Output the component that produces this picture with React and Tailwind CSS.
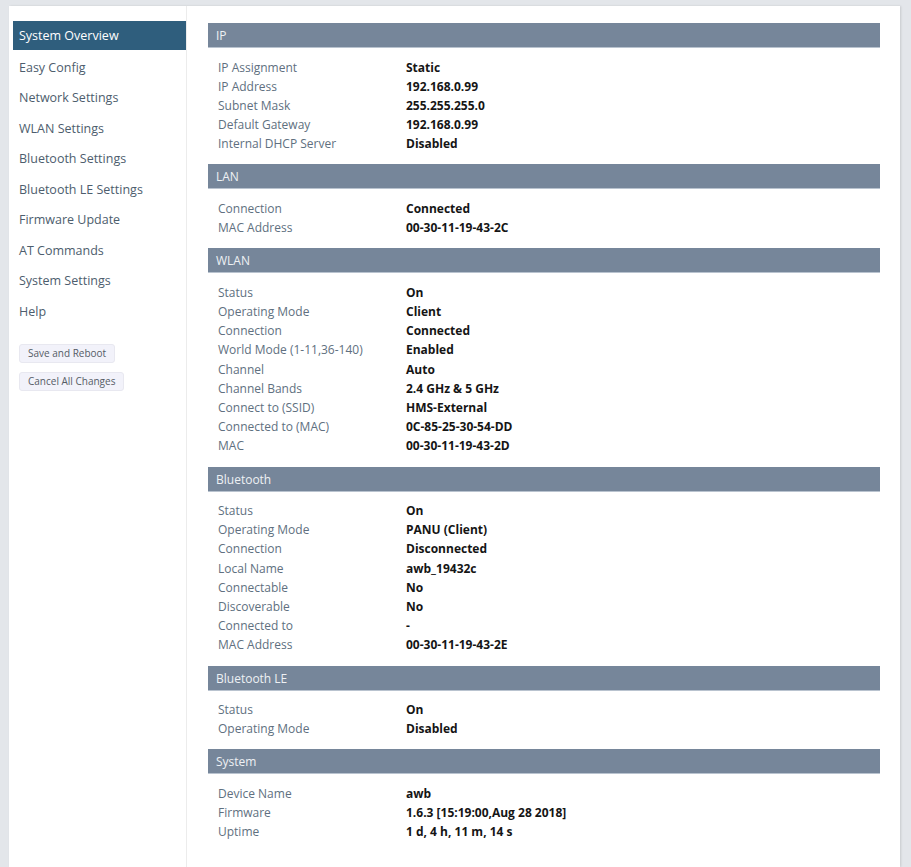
import React from 'react';

const menu = [
    'System Overview',
    'Easy Config',
    'Network Settings',
    'WLAN Settings',
    'Bluetooth Settings',
    'Bluetooth LE Settings',
    'Firmware Update',
    'AT Commands',
    'System Settings',
    'Help',
];

const sections = [
    {
        title: 'IP',
        rows: [
            ['IP Assignment', 'Static'],
            ['IP Address', '192.168.0.99'],
            ['Subnet Mask', '255.255.255.0'],
            ['Default Gateway', '192.168.0.99'],
            ['Internal DHCP Server', 'Disabled'],
        ],
    },
    {
        title: 'LAN',
        rows: [
            ['Connection', 'Connected'],
            ['MAC Address', '00-30-11-19-43-2C'],
        ],
    },
    {
        title: 'WLAN',
        rows: [
            ['Status', 'On'],
            ['Operating Mode', 'Client'],
            ['Connection', 'Connected'],
            ['World Mode (1-11,36-140)', 'Enabled'],
            ['Channel', 'Auto'],
            ['Channel Bands', '2.4 GHz & 5 GHz'],
            ['Connect to (SSID)', 'HMS-External'],
            ['Connected to (MAC)', '0C-85-25-30-54-DD'],
            ['MAC', '00-30-11-19-43-2D'],
        ],
    },
    {
        title: 'Bluetooth',
        rows: [
            ['Status', 'On'],
            ['Operating Mode', 'PANU (Client)'],
            ['Connection', 'Disconnected'],
            ['Local Name', 'awb_19432c'],
            ['Connectable', 'No'],
            ['Discoverable', 'No'],
            ['Connected to', '-'],
            ['MAC Address', '00-30-11-19-43-2E'],
        ],
    },
    {
        title: 'Bluetooth LE',
        rows: [
            ['Status', 'On'],
            ['Operating Mode', 'Disabled'],
        ],
    },
    {
        title: 'System',
        rows: [
            ['Device Name', 'awb'],
            ['Firmware', '1.6.3 [15:19:00,Aug 28 2018]'],
            ['Uptime', '1 d, 4 h, 11 m, 14 s'],
        ],
    },
];

const Section = ({ title, rows }) => (
    <div className="mb-[10.5px]">
        <div className="h-[25px] bg-[#76869a] border-b border-[#b9c3cf] pl-[8px] pt-[2px] flex items-center text-[12px] text-[#eef1f4]">
            {title}
        </div>
        <div className="pt-[10px]">
            {rows.map(([label, value], i) => (
                <div key={i} className="flex h-[19.2px] items-center text-[12px]">
                    <div className="w-[198px] shrink-0 pl-[10px] text-[#607080]">{label}</div>
                    <div className="font-bold text-[#151515]">{value}</div>
                </div>
            ))}
        </div>
    </div>
);

const App = () => {
    return (
        <div className="min-h-screen bg-[#e3e6ea] pt-[6px] pl-[9px] pr-[11px] font-['Open_Sans',sans-serif]">
            <div className="flex min-h-[861px] bg-white shadow-[1px_0_2px_rgba(0,0,0,0.12)]">
                {/* menu gauche */}
                <div className="w-[178px] shrink-0 border-r border-[#ececec] pl-[4px] pt-[15px]">
                    {menu.map((item, i) => (
                        <div
                            key={item}
                            className={
                                i === 0
                                    ? 'h-[29px] mb-[1.5px] flex items-center pl-[6px] pt-[2px] bg-[#2f5e7d] text-white text-[12.5px]'
                                    : 'h-[30.5px] flex items-center pl-[6px] pt-[3px] text-[#4d5d6d] text-[12.5px]'
                            }
                        >
                            {item}
                        </div>
                    ))}
                    <div className="pl-[6px] pt-[18px] flex flex-col items-start gap-[9px]">
                        <button className="h-[19px] px-[8px] rounded-[3px] bg-[#f2f2fa] border border-[#e8e8f0] text-[10px] text-[#555c66]">
                            Save and Reboot
                        </button>
                        <button className="h-[19px] px-[8px] rounded-[3px] bg-[#f2f2fa] border border-[#e8e8f0] text-[10px] text-[#555c66]">
                            Cancel All Changes
                        </button>
                    </div>
                </div>

                {/* contenu */}
                <div className="flex-1 pl-[21px] pr-[20px] pt-[17px]">
                    {sections.map((s) => (
                        <Section key={s.title} title={s.title} rows={s.rows} />
                    ))}
                </div>
            </div>
        </div>
    );
};

export default App;
